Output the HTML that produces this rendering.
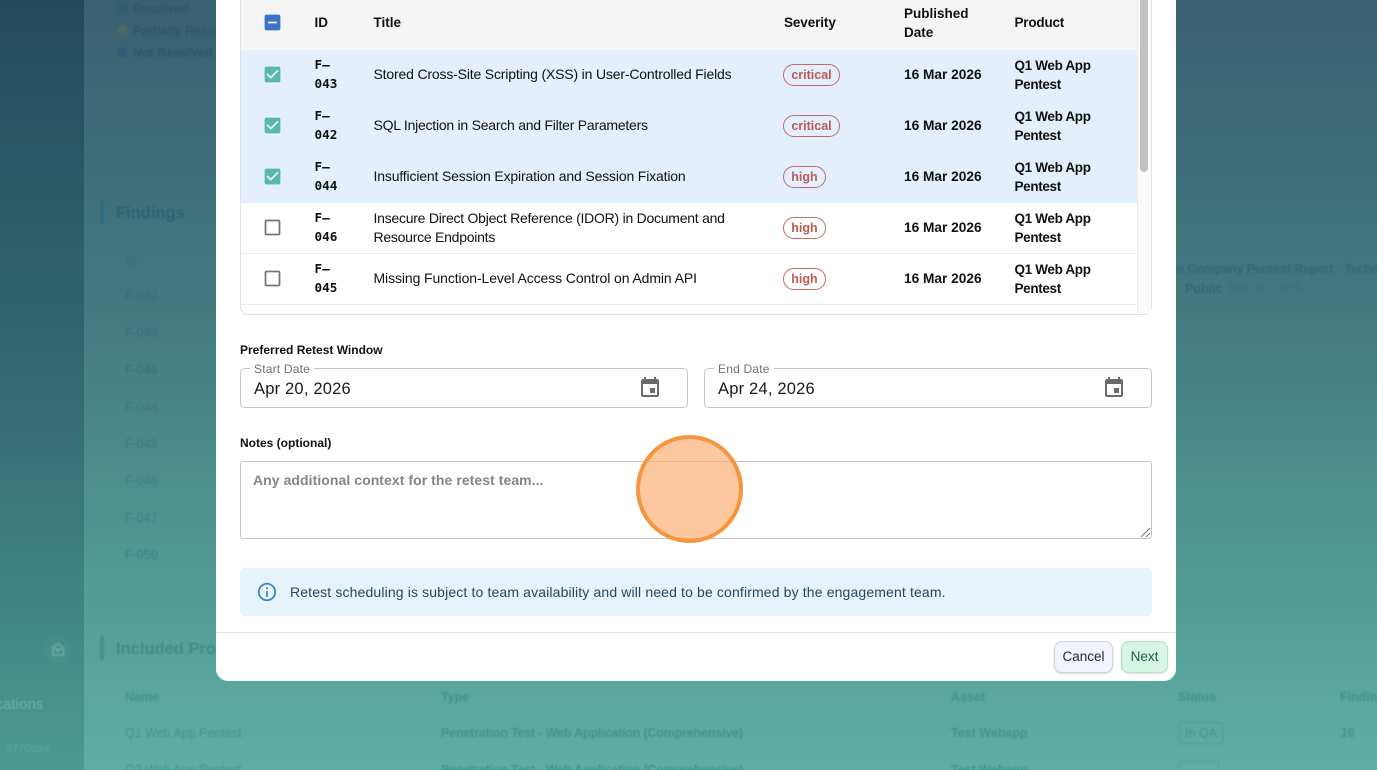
<!DOCTYPE html>
<html><head><meta charset="utf-8">
<style>
html,body{margin:0;padding:0;width:1377px;height:770px;overflow:hidden}
body{font-family:"Liberation Sans",sans-serif;position:relative;background:linear-gradient(180deg,#3a6071 0%,#437a80 40%,#529a94 75%,#5dafa5 100%)}
.abs,.t{position:absolute}
.t{white-space:nowrap}
#side{left:0;top:0;width:84px;height:770px;background:linear-gradient(180deg,#244b5c 0%,#346a72 50%,#4a9a92 100%)}
#bg{left:0;top:0;width:1377px;height:770px;filter:blur(.8px)}
#bg .t{font-size:12.5px;color:#396f7e}
#bg .b{font-weight:bold}
#modal{left:216px;top:-20px;width:960px;height:701px;background:#fff;border-radius:12px}
#tbl{left:240px;top:-10px;width:910px;height:323px;border:1px solid #e2e2e2;border-radius:0 0 8px 8px;overflow:hidden}
#m .t{color:#111;font-size:14px}
.sel{background:#e3effc}
.id{font-family:"DejaVu Sans Mono",monospace;font-weight:bold;font-size:12.7px !important;line-height:19px;white-space:pre !important}
#m .prod{font-weight:bold;line-height:19px;font-size:13.5px;letter-spacing:-.34px}
.date{font-weight:bold}
.sev{position:absolute;left:783px;height:22px;box-sizing:border-box;border:1px solid #c46a64;border-radius:12px;color:#bd5a52;font-size:12.5px;font-weight:bold;line-height:21px;text-align:center}
.cb{position:absolute;left:261.5px;width:21px;height:21px}
.fld{position:absolute;top:368px;width:448px;height:40px;box-sizing:border-box;border:1px solid #c4c4c4;border-radius:5px}
.leg{position:absolute;top:363px;background:#fff;padding:0 4px;color:#6f6f6f;font-size:12px;line-height:13px;letter-spacing:.2px}
.val{position:absolute;top:380px;font-size:16.5px;color:#1a1a1a;letter-spacing:.2px;white-space:nowrap}
.cal{position:absolute;top:376px;width:24px;height:24px;fill:#6b6b6b}
.btn{position:absolute;top:641px;height:32px;box-sizing:border-box;border-radius:8px;font-size:13.5px;line-height:30px;text-align:center}
</style></head>
<body>
<div class="abs" id="side"></div>
<div class="abs" id="bg">
 <div class="abs" style="left:117px;top:3px;width:11px;height:11px;border-radius:50%;background:#2f5f70"></div>
 <div class="abs" style="left:117px;top:25px;width:11px;height:11px;border-radius:50%;background:#4b6664"></div>
 <div class="abs" style="left:117px;top:47px;width:11px;height:11px;border-radius:50%;background:#355c76"></div>
 <div class="t b" style="left:133px;top:2px;color:#2c5a6c">Resolved</div>
 <div class="t b" style="left:133px;top:24px;color:#2c5a6c">Partially Resolved</div>
 <div class="t b" style="left:133px;top:46px;color:#2c5a6c">Not Resolved</div>
 <div class="abs" style="left:100px;top:200px;width:4px;height:24px;background:#2f6e80"></div>
 <div class="t b" style="left:116px;top:204px;font-size:16.5px;color:#2c6272">Findings</div>
 <div class="t" style="left:125px;top:254px">ID</div>
 <div class="t" style="left:125px;top:289px">F-042</div>
 <div class="t" style="left:125px;top:326px">F-043</div>
 <div class="t" style="left:125px;top:363px">F-046</div>
 <div class="t" style="left:125px;top:400px;color:#3c7884">F-044</div>
 <div class="t" style="left:125px;top:437px;color:#3c7884">F-045</div>
 <div class="t" style="left:125px;top:474px;color:#3e7f88">F-048</div>
 <div class="t" style="left:125px;top:511px;color:#3e7f88">F-047</div>
 <div class="t" style="left:125px;top:548px;color:#3e7f88">F-050</div>
 <div class="abs" style="left:100px;top:636px;width:4px;height:24px;background:#429090"></div>
 <div class="t b" style="left:116px;top:640px;font-size:16.5px;color:#3f8c8c">Included Products</div>
 <div class="t b" style="left:125px;top:690px;color:#429490">Name</div>
 <div class="t b" style="left:441px;top:690px;color:#429490">Type</div>
 <div class="t b" style="left:951px;top:690px;color:#429490">Asset</div>
 <div class="t b" style="left:1178px;top:690px;color:#429490">Status</div>
 <div class="t b" style="left:1340px;top:690px;color:#429490">Findings</div>
 <div class="t" style="left:125px;top:726px;color:#429490">Q1 Web App Pentest</div>
 <div class="t b" style="left:441px;top:726px;color:#429490;letter-spacing:-.18px">Penetration Test - Web Application (Comprehensive)</div>
 <div class="t b" style="left:951px;top:726px;color:#429490">Test Webapp</div>
 <div class="abs" style="left:1179px;top:722px;width:42px;height:20px;border:1px solid #4c9e9c;border-radius:3px"></div>
 <div class="t" style="left:1185px;top:726px;color:#429490">In QA</div>
 <div class="t b" style="left:1341px;top:726px;color:#429490">10</div>
 <div class="t" style="left:125px;top:763px;color:#429490">Q2 Web App Pentest</div>
 <div class="t b" style="left:441px;top:763px;color:#429490;letter-spacing:-.18px">Penetration Test - Web Application (Comprehensive)</div>
 <div class="t b" style="left:951px;top:763px;color:#429490">Test Webapp</div>
 <div class="abs" style="left:1179px;top:761px;width:38px;height:20px;border:1px solid #4c9e9c;border-radius:3px"></div>
 <div class="t b" style="left:1174px;top:262px;color:#2f6a78;letter-spacing:-.15px">le Company Pentest Report - Technical</div>
 <div class="t b" style="left:1185px;top:282px;color:#2f6a78">Public</div>
 <div class="t" style="left:1228px;top:282px;color:#3a7580">Mar 16, 2026</div>
 <div class="t" style="left:-8px;top:697px;font-size:14.5px;color:#6fb3a9;letter-spacing:.3px">ications</div>
 <div class="t" style="left:6px;top:743px;font-size:11px;color:#5aa89e">3770dad</div>
 <div class="abs" style="left:44px;top:635px;width:28px;height:28px;border-radius:50%;background:rgba(255,255,255,.025)"></div>
 <svg class="abs" style="left:50px;top:641px" width="16" height="16" viewBox="0 0 24 24" fill="none" stroke="#66aca2" stroke-width="2.4"><path d="M4 10 12 4l8 6v11H4zM4 12h16M9 15h6M12 12v5"/></svg>
</div>

<div class="abs" id="modal"></div>
<div id="m">
 <div class="abs" id="tbl"></div>
 <div class="abs" style="left:241px;top:0;width:896px;height:50px;background:#f5f5f5"></div>
 <div class="abs sel" style="left:241px;top:50px;width:896px;height:153px"></div>
 <div class="abs" style="left:241px;top:253px;width:896px;height:1px;background:#ececec"></div>
 <div class="abs" style="left:241px;top:304px;width:896px;height:1px;background:#ececec"></div>
 <div class="abs" style="left:1137px;top:0;width:14px;height:313px;background:#fafafa;border-left:1px solid #ececec;box-sizing:border-box"></div>
 <div class="abs" style="left:1140px;top:0;width:8px;height:172px;background:#c1c1c1;border-radius:0 0 4px 4px"></div>

 <svg class="cb" style="top:12px" viewBox="0 0 24 24" fill="#3f72c9"><path d="M19 3H5c-1.1 0-2 .9-2 2v14c0 1.1.9 2 2 2h14c1.1 0 2-.9 2-2V5c0-1.1-.9-2-2-2zm-2 10H7v-2h10v2z"/></svg>
 <div class="t" style="left:314.5px;top:15px;font-weight:bold;font-size:13.5px">ID</div>
 <div class="t" style="left:373.5px;top:15px;font-weight:bold;font-size:13.5px">Title</div>
 <div class="t" style="left:784px;top:15px;font-weight:bold;font-size:13.5px;letter-spacing:-.1px">Severity</div>
 <div class="t" style="left:904px;top:4px;font-weight:bold;font-size:13.5px;line-height:19px">Published<br>Date</div>
 <div class="t" style="left:1014.5px;top:15px;font-weight:bold;font-size:13.5px;letter-spacing:-.2px">Product</div>

 <svg class="cb" style="top:64px" viewBox="0 0 24 24" fill="#5ab8a8"><path d="M19 3H5c-1.11 0-2 .9-2 2v14c0 1.1.89 2 2 2h14c1.1 0 2-.9 2-2V5c0-1.1-.89-2-2-2zm-9 14l-5-5 1.41-1.41L10 14.17l7.59-7.59L19 8l-9 9z"/></svg>
 <div class="t id" style="left:314.5px;top:55px">F–
043</div>
 <div class="t" style="left:373.5px;top:66px;letter-spacing:-.17px">Stored Cross-Site Scripting (XSS) in User-Controlled Fields</div>
 <div class="sev" style="top:64px;width:57px">critical</div>
 <div class="t date" style="left:904px;top:67px;font-size:13.7px">16 Mar 2026</div>
 <div class="t prod" style="left:1014.5px;top:56px">Q1 Web App<br>Pentest</div>

 <svg class="cb" style="top:115px" viewBox="0 0 24 24" fill="#5ab8a8"><path d="M19 3H5c-1.11 0-2 .9-2 2v14c0 1.1.89 2 2 2h14c1.1 0 2-.9 2-2V5c0-1.1-.89-2-2-2zm-9 14l-5-5 1.41-1.41L10 14.17l7.59-7.59L19 8l-9 9z"/></svg>
 <div class="t id" style="left:314.5px;top:106px">F–
042</div>
 <div class="t" style="left:373.5px;top:117px;letter-spacing:-.24px">SQL Injection in Search and Filter Parameters</div>
 <div class="sev" style="top:115px;width:57px">critical</div>
 <div class="t date" style="left:904px;top:118px;font-size:13.7px">16 Mar 2026</div>
 <div class="t prod" style="left:1014.5px;top:107px">Q1 Web App<br>Pentest</div>

 <svg class="cb" style="top:166px" viewBox="0 0 24 24" fill="#5ab8a8"><path d="M19 3H5c-1.11 0-2 .9-2 2v14c0 1.1.89 2 2 2h14c1.1 0 2-.9 2-2V5c0-1.1-.89-2-2-2zm-9 14l-5-5 1.41-1.41L10 14.17l7.59-7.59L19 8l-9 9z"/></svg>
 <div class="t id" style="left:314.5px;top:157px">F–
044</div>
 <div class="t" style="left:373.5px;top:168px;letter-spacing:-.16px">Insufficient Session Expiration and Session Fixation</div>
 <div class="sev" style="top:166px;width:43px">high</div>
 <div class="t date" style="left:904px;top:169px;font-size:13.7px">16 Mar 2026</div>
 <div class="t prod" style="left:1014.5px;top:158px">Q1 Web App<br>Pentest</div>

 <svg class="cb" style="top:217px" viewBox="0 0 24 24" fill="#757575"><path d="M19 5v14H5V5h14m0-2H5c-1.1 0-2 .9-2 2v14c0 1.1.9 2 2 2h14c1.1 0 2-.9 2-2V5c0-1.1-.9-2-2-2z"/></svg>
 <div class="t id" style="left:314.5px;top:208px">F–
046</div>
 <div class="t" style="left:373.5px;top:209px;line-height:19px;letter-spacing:-.25px">Insecure Direct Object Reference (IDOR) in Document and<br>Resource Endpoints</div>
 <div class="sev" style="top:217px;width:43px">high</div>
 <div class="t date" style="left:904px;top:220px;font-size:13.7px">16 Mar 2026</div>
 <div class="t prod" style="left:1014.5px;top:209px">Q1 Web App<br>Pentest</div>

 <svg class="cb" style="top:268px" viewBox="0 0 24 24" fill="#757575"><path d="M19 5v14H5V5h14m0-2H5c-1.1 0-2 .9-2 2v14c0 1.1.9 2 2 2h14c1.1 0 2-.9 2-2V5c0-1.1-.9-2-2-2z"/></svg>
 <div class="t id" style="left:314.5px;top:259px">F–
045</div>
 <div class="t" style="left:373.5px;top:270px;letter-spacing:-.1px">Missing Function-Level Access Control on Admin API</div>
 <div class="sev" style="top:268px;width:43px">high</div>
 <div class="t date" style="left:904px;top:271px;font-size:13.7px">16 Mar 2026</div>
 <div class="t prod" style="left:1014.5px;top:260px">Q1 Web App<br>Pentest</div>

 <div class="t" style="left:240px;top:343px;font-size:12px;font-weight:bold">Preferred Retest Window</div>
 <div class="fld" style="left:240px"></div>
 <div class="leg" style="left:250px">Start Date</div>
 <div class="val" style="left:254px">Apr 20, 2026</div>
 <svg class="cal" style="left:638px" viewBox="0 0 24 24"><path d="M17 12h-5v5h5v-5zM16 1v2H8V1H6v2H5c-1.11 0-1.99.9-1.99 2L3 19c0 1.1.89 2 2 2h14c1.1 0 2-.9 2-2V5c0-1.1-.9-2-2-2h-1V1h-2zm3 18H5V8h14v11z"/></svg>
 <div class="fld" style="left:704px"></div>
 <div class="leg" style="left:714px">End Date</div>
 <div class="val" style="left:718px">Apr 24, 2026</div>
 <svg class="cal" style="left:1102px" viewBox="0 0 24 24"><path d="M17 12h-5v5h5v-5zM16 1v2H8V1H6v2H5c-1.11 0-1.99.9-1.99 2L3 19c0 1.1.89 2 2 2h14c1.1 0 2-.9 2-2V5c0-1.1-.9-2-2-2h-1V1h-2zm3 18H5V8h14v11z"/></svg>

 <div class="t" style="left:240px;top:436px;font-size:12px;font-weight:bold">Notes (optional)</div>
 <div class="abs" style="left:240px;top:461px;width:912px;height:78px;box-sizing:border-box;border:1px solid #c4c4c4;border-radius:3px"></div>
 <div class="t" style="left:253px;top:472px;color:#858585;font-weight:bold;font-size:14px;letter-spacing:.06px">Any additional context for the retest team...</div>
 <svg class="abs" style="left:1140px;top:527px" width="11" height="11" stroke="#777" stroke-width="1" fill="none"><path d="M1 10 10 1M6 10l4-4"/></svg>

 <div class="abs" style="left:240px;top:568px;width:912px;height:48px;background:#e6f3fb;border-radius:4px"></div>
 <svg class="abs" style="left:256px;top:581px" width="22" height="22" viewBox="0 0 24 24" fill="#3f85bf"><path d="M11 7h2v2h-2zm0 4h2v6h-2zm1-9C6.48 2 2 6.48 2 12s4.48 10 10 10 10-4.48 10-10S17.52 2 12 2zm0 18c-4.41 0-8-3.59-8-8s3.59-8 8-8 8 3.59 8 8-3.59 8-8 8z"/></svg>
 <div class="t" style="left:290px;top:584px;color:#28475c;letter-spacing:.14px">Retest scheduling is subject to team availability and will need to be confirmed by the engagement team.</div>

 <div class="abs" style="left:216px;top:632px;width:960px;height:1px;background:#e2e2e2"></div>
 <div class="btn" style="left:1054px;width:59px;background:#f1f3fa;border:1px solid #d3d3dc;color:#23283a;box-shadow:0 1px 2px rgba(0,0,0,.15)">Cancel</div>
 <div class="btn" style="left:1121px;width:47px;background:#d6f6e4;border:1px solid #b4dcc6;color:#24564a;box-shadow:0 1px 2px rgba(0,0,0,.12)">Next</div>

 <div class="abs" style="left:636px;top:435px;width:107px;height:108px;box-sizing:border-box;border:4px solid #f7953f;border-radius:50%;background:rgba(252,170,105,.65)"></div>
</div>
</body></html>
